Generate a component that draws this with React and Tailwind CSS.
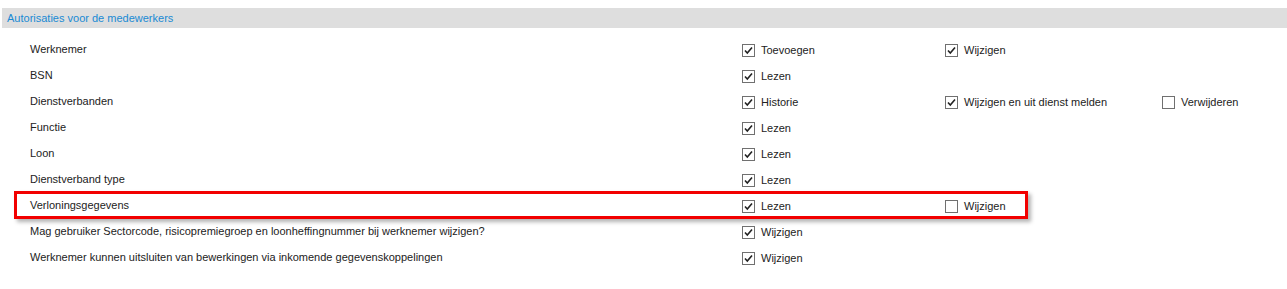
import React from "react";

const rows = [
  { label: "Werknemer", opts: [["Toevoegen", true], ["Wijzigen", true]] },
  { label: "BSN", opts: [["Lezen", true]] },
  {
    label: "Dienstverbanden",
    opts: [["Historie", true], ["Wijzigen en uit dienst melden", true], ["Verwijderen", false]],
  },
  { label: "Functie", opts: [["Lezen", true]] },
  { label: "Loon", opts: [["Lezen", true]] },
  { label: "Dienstverband type", opts: [["Lezen", true]] },
  { label: "Verloningsgegevens", opts: [["Lezen", true], ["Wijzigen", false]], marked: true },
  {
    label: "Mag gebruiker Sectorcode, risicopremiegroep en loonheffingnummer bij werknemer wijzigen?",
    opts: [["Wijzigen", true]],
  },
  {
    label: "Werknemer kunnen uitsluiten van bewerkingen via inkomende gegevenskoppelingen",
    opts: [["Wijzigen", true]],
  },
];

function Box({ checked }) {
  return (
    <span className="w-[13px] h-[13px] border border-[#707070] bg-white flex items-center justify-center shrink-0">
      {checked && (
        <svg width="9" height="9" viewBox="0 0 9 9">
          <path d="M1 4.5 L3.3 7 L8 1.5" fill="none" stroke="#222" strokeWidth="1.6" />
        </svg>
      )}
    </span>
  );
}

export default function App() {
  return (
    <div className="w-[1287px] h-[289px] bg-white pt-[8px] text-[11px] text-[#222]" style={{ fontFamily: '"Liberation Sans", Arial, sans-serif' }}>
      <div className="ml-[2px] h-[20px] bg-[#dedede] flex items-center pl-[5px] text-[#1a8ad4]">
        Autorisaties voor de medewerkers
      </div>
      <div className="pt-[9px]">
        {rows.map((row, i) => (
          <div key={i} className="relative h-[26px] grid grid-cols-[712px_203px_217px_1fr] items-center pl-[30px]">
            {row.marked && (
              <div className="absolute left-[14px] top-[-2px] w-[1014px] h-[28px] border-[3px] border-[#f20000] shadow-[3px_3px_4px_rgba(0,0,0,0.3)] pointer-events-none" />
            )}
            <span className="leading-none -mt-[2px]">{row.label}</span>
            {row.opts.map(([text, checked], j) => (
              <label key={j} className="flex items-center gap-[6px]">
                <Box checked={checked} />
                <span className="leading-none mt-[1px]">{text}</span>
              </label>
            ))}
          </div>
        ))}
      </div>
    </div>
  );
}
